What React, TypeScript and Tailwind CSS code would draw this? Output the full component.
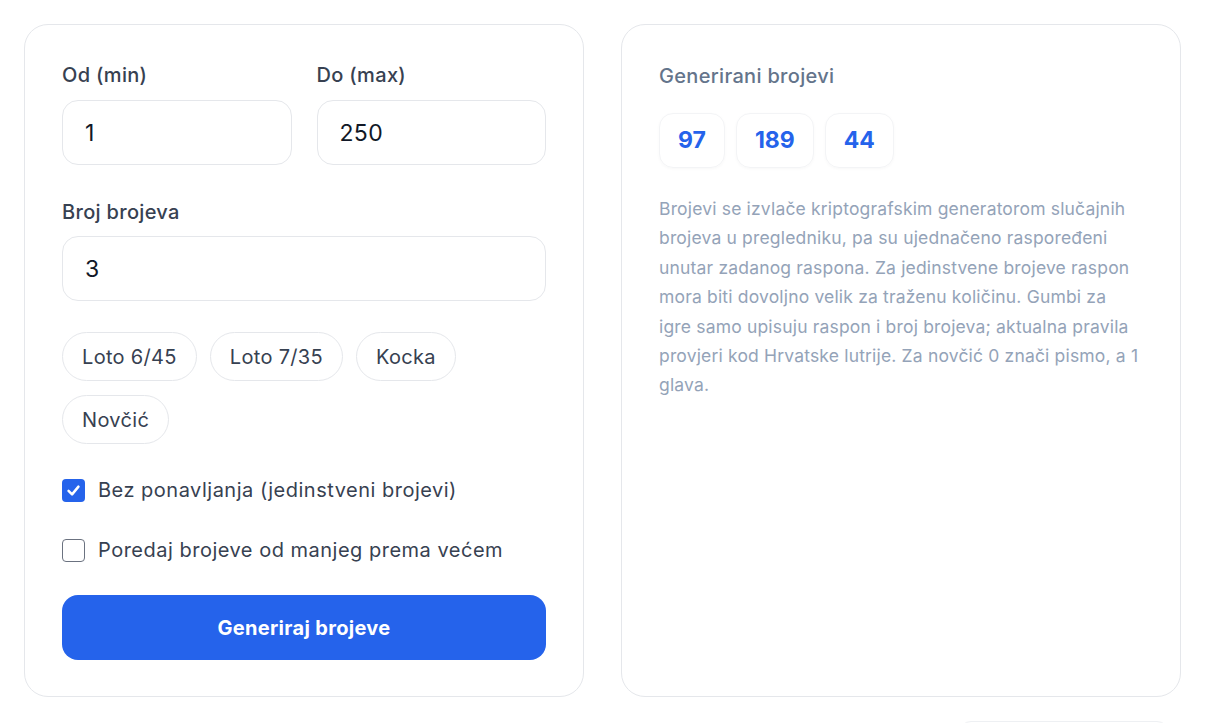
import React, { useState } from 'react';

const presets = ['Loto 6/45', 'Loto 7/35', 'Kocka', 'Novčić'];

function Check({ checked, label, onToggle }: { checked: boolean; label: string; onToggle: () => void }) {
  return (
    <button type="button" onClick={onToggle} className="flex items-center gap-[13px] h-[28px] text-left">
      {checked ? (
        <span className="w-[23px] h-[23px] rounded-[4px] bg-[#2563eb] flex items-center justify-center shrink-0">
          <svg width="17" height="17" viewBox="0 0 24 24" fill="none" stroke="white" strokeWidth="3.5" strokeLinecap="round" strokeLinejoin="round">
            <polyline points="5 12.5 10 17.5 19 6.5" />
          </svg>
        </span>
      ) : (
        <span className="w-[23px] h-[23px] rounded-[4px] border-[1.5px] border-[#6b7280] bg-white shrink-0" />
      )}
      <span className="text-[20px] tracking-[0.025em] text-[#374151]">{label}</span>
    </button>
  );
}

export default function App() {
  const [unique, setUnique] = useState(true);
  const [sorted, setSorted] = useState(false);

  return (
    <div className="min-h-screen bg-white font-['Inter',_'Noto_Sans',_sans-serif] tracking-[0.02em] px-[24px] pt-[24px] overflow-hidden">
      <div className="grid grid-cols-[560px_560px] gap-[37px]">
        {/* LEFT: FORM */}
        <div className="border border-[#e5e7eb] rounded-[24px] px-[37px] pt-[36px] pb-[36px] flex flex-col">
          <div className="grid grid-cols-2 gap-[25px]">
            <div className="flex flex-col">
              <label className="h-[28px] leading-[28px] text-[20px] font-medium text-[#374151]">Od (min)</label>
              <input
                defaultValue="1"
                className="mt-[11px] h-[65px] w-full rounded-[16px] border border-[#e5e7eb] px-[22px] text-[23px] text-[#111827] outline-none"
              />
            </div>
            <div className="flex flex-col">
              <label className="h-[28px] leading-[28px] text-[20px] font-medium text-[#374151]">Do (max)</label>
              <input
                defaultValue="250"
                className="mt-[11px] h-[65px] w-full rounded-[16px] border border-[#e5e7eb] px-[22px] text-[23px] text-[#111827] outline-none"
              />
            </div>
          </div>

          <div className="mt-[33px] flex flex-col">
            <label className="h-[28px] leading-[28px] text-[20px] font-medium text-[#374151]">Broj brojeva</label>
            <input
              defaultValue="3"
              className="mt-[10px] h-[65px] w-full rounded-[16px] border border-[#e5e7eb] px-[22px] text-[23px] text-[#111827] outline-none"
            />
          </div>

          <div className="mt-[31px] flex flex-wrap gap-x-[13px] gap-y-[14px]">
            {presets.map((p) => (
              <button
                key={p}
                type="button"
                className="h-[49px] px-[19px] rounded-full border border-[#e5e7eb] bg-white text-[20px] text-[#374151]"
              >
                {p}
              </button>
            ))}
          </div>

          <div className="mt-[32px] flex flex-col gap-[32px]">
            <Check checked={unique} label="Bez ponavljanja (jedinstveni brojevi)" onToggle={() => setUnique(!unique)} />
            <Check checked={sorted} label="Poredaj brojeve od manjeg prema većem" onToggle={() => setSorted(!sorted)} />
          </div>

          <button
            type="button"
            className="mt-[31px] h-[65px] w-full rounded-[16px] bg-[#2563eb] text-white text-[20px] font-bold"
          >
            Generiraj brojeve
          </button>
        </div>

        {/* RIGHT: RESULTS */}
        <div className="border border-[#e5e7eb] rounded-[24px] px-[37px] pt-[37px] pb-[36px]">
          <div className="h-[28px] leading-[28px] text-[20px] font-medium text-[#64748b]">Generirani brojevi</div>
          <div className="mt-[23px] flex gap-[11px]">
            {[97, 189, 44].map((n) => (
              <div
                key={n}
                className="h-[55px] px-[18px] rounded-[14px] border border-[#f3f4f6] shadow-[0_1px_3px_rgba(15,23,42,0.03)] flex items-center justify-center text-[23px] tracking-normal font-bold text-[#2563eb]"
              >
                {n}
              </div>
            ))}
          </div>
          <p className="mt-[26px] text-[17.5px] tracking-[0.01em] leading-[29.4px] text-[#94a3b8]">
            Brojevi se izvlače kriptografskim generatorom slučajnih brojeva u pregledniku, pa su ujednačeno raspoređeni
            unutar zadanog raspona. Za jedinstvene brojeve raspon mora biti dovoljno velik za traženu količinu. Gumbi za
            igre samo upisuju raspon i broj brojeva; aktualna pravila provjeri kod Hrvatske lutrije. Za novčić 0 znači
            pismo, a 1 glava.
          </p>
        </div>
      </div>

      {/* faint edge of the next block */}
      <div className="mt-[24px] flex justify-end pr-[13px]">
        <div className="w-[210px] h-[20px] rounded-t-[12px] border border-[#eef0f3]" />
      </div>
    </div>
  );
}
